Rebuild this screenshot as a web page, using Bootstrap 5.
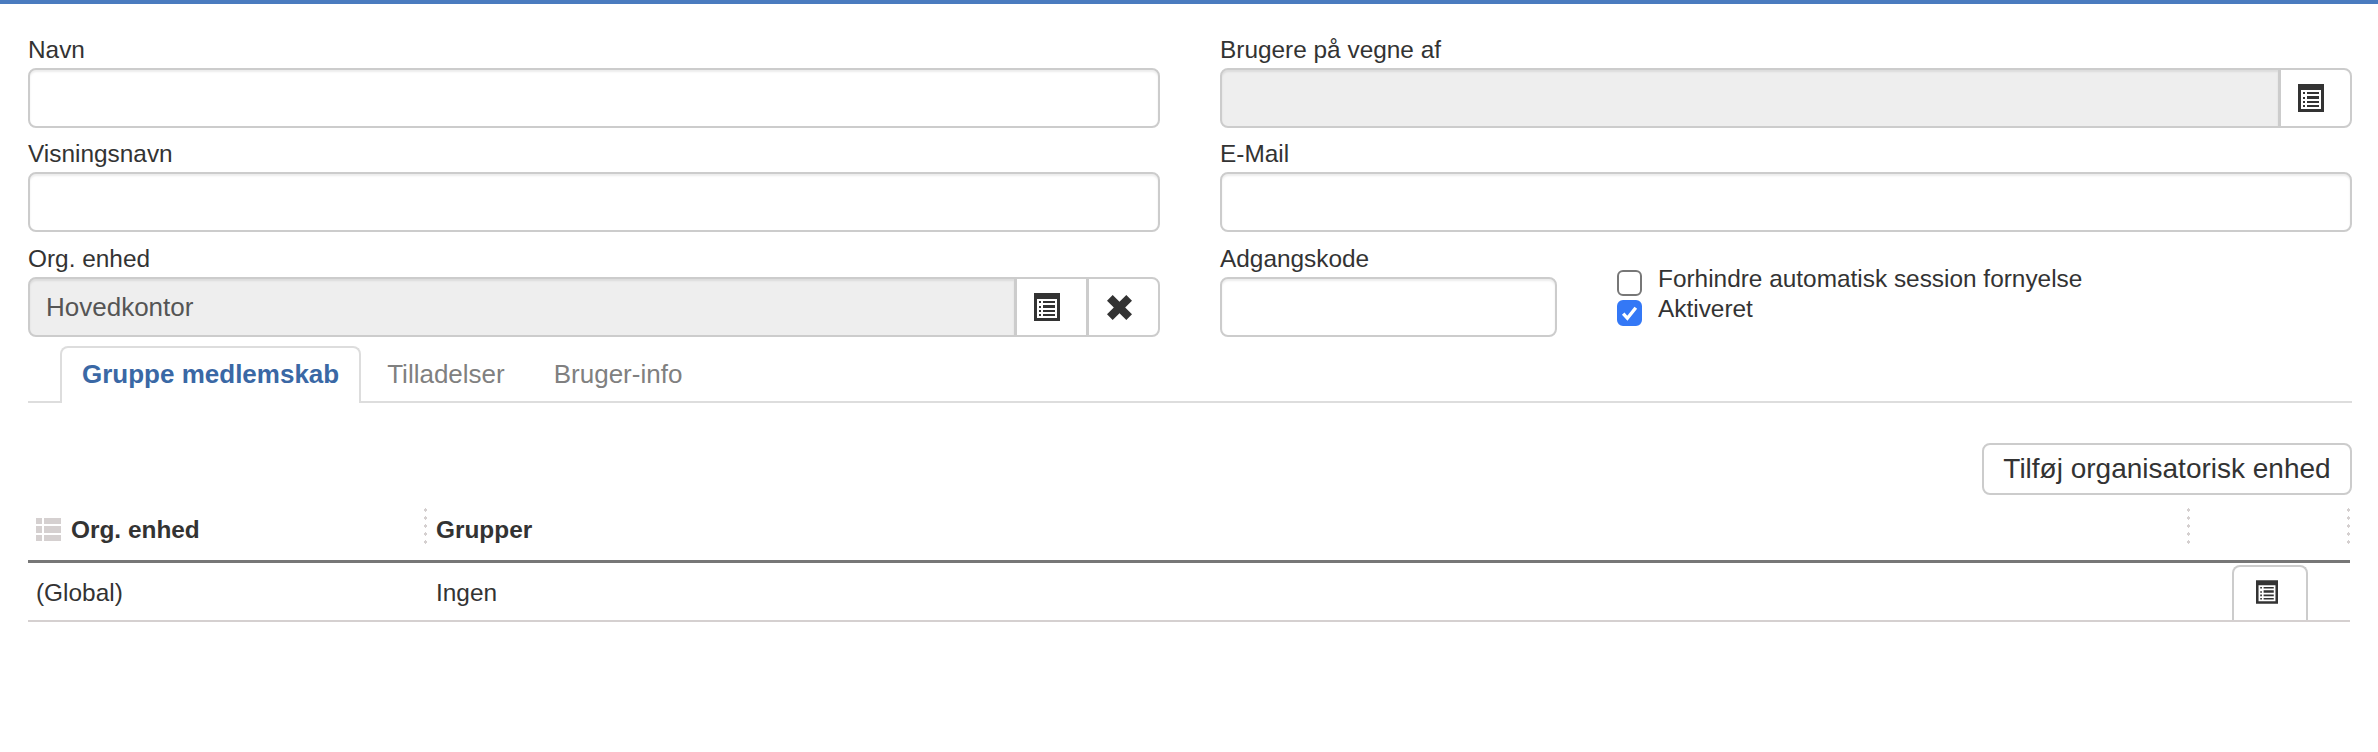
<!DOCTYPE html>
<html lang="da">
<head>
    <meta charset="UTF-8">
    <title>Bruger</title>
    <link href="https://cdn.jsdelivr.net/npm/bootstrap@5.3.0/dist/css/bootstrap.min.css" rel="stylesheet">
    <style>
        body {
            font-family: "Liberation Sans", Arial, sans-serif;
            font-size: 24.4px;
            color: #333;
            background: #fff;
            border-top: 4px solid #4a7bbf;
        }
        .page-wrap { padding: 20px 26px 0 28px; }
        .form-cols { --bs-gutter-x: 60px; --bs-gutter-y: 0; }
        .field-label { display: block; height: 44px; line-height: 52px; margin: 0; white-space: nowrap; }
        .field-last { margin-top: 1px; }
        .field-input {
            height: 60px;
            font-size: 26px;
            color: #555;
            border: 2px solid #ccc;
            border-radius: 8px;
            padding: 0 16px;
            box-shadow: inset 0 2px 2px rgba(0, 0, 0, .075);
        }
        .field-input:disabled, .field-input[readonly] { background: #eee; }
        .field-group .btn-pick {
            width: 73px;
            height: 60px;
            padding: 0 9px 0 0;
            border: 2px solid #ccc;
            border-radius: 8px;
            background: #fff;
            display: flex;
            align-items: center;
            justify-content: center;
        }
        .code-col { width: 337px; flex: none; }
        .check-col { margin-left: 60px; padding-top: 31px; }
        .check-line { display: flex; align-items: flex-start; gap: 16px; height: 30px; line-height: 30px; }
        .check-line .form-check-input {
            width: 25px;
            height: 26px;
            margin: 6px 0 0;
            border: 2px solid #777;
            border-radius: 6px;
            flex: none;
        }
        .check-line .form-check-input:checked {
            background-color: #3478f6;
            border-color: #3478f6;
            background-size: 100% 100%;
            background-image: url("data:image/svg+xml,%3csvg xmlns='http://www.w3.org/2000/svg' viewBox='0 0 20 20'%3e%3cpath fill='none' stroke='%23fff' stroke-width='3.2' d='M4 10.5l4 4.5 8-10'/%3e%3c/svg%3e");
        }
        .tab-row { margin-top: 9px; padding-left: 32px; border-bottom: 2px solid #ddd; }
        .tab-row .nav-link {
            height: 57px;
            padding: 0 21px;
            line-height: 52px;
            font-size: 26px;
            color: #808080;
            border: 2px solid transparent;
            border-bottom: 0;
            border-radius: 8px 8px 0 0;
            margin-bottom: -2px;
        }
        .tab-row .nav-link.active {
            padding: 0 20px;
            color: #3a68a5;
            font-weight: 700;
            background: #fff;
            border-color: #ddd;
        }
        .tab-row .nav-item + .nav-item .nav-link { margin-left: 3px; }
        .tool-row { margin-top: 40px; margin-bottom: 5px; }
        .btn-add {
            height: 52px;
            width: 370px;
            padding: 0;
            font-size: 28px;
            color: #333;
            background: #fff;
            border: 2px solid #ccc;
            border-radius: 8px;
        }
        .member-table { table-layout: fixed; width: 2322px; margin: 0; font-size: 24.4px; color: #333; }
        .member-table th {
            position: relative;
            height: 53px;
            padding: 0 8px 0 9px;
            vertical-align: middle;
            border-bottom: 3px solid #777;
            font-weight: 700;
            line-height: 60px;
        }
        .member-table th:first-child { padding-left: 8px; }
        .member-table th.has-dots::after {
            content: "";
            position: absolute;
            right: 0;
            top: 6px;
            width: 3px;
            height: 40px;
            background-image: radial-gradient(circle, #d5d0d0 1.5px, transparent 1.6px);
            background-size: 3px 8px;
        }
        .member-table td {
            height: 59px;
            padding: 4px 8px 0 9px;
            vertical-align: middle;
            border-bottom: 2px solid #d5d0d0;
        }
        .member-table td:first-child { padding-left: 8px; }
        .member-table td.row-action { padding: 0; vertical-align: bottom; text-align: center; }
        .btn-row {
            display: inline-flex;
            justify-content: center;
            align-items: flex-start;
            width: 76px;
            height: 55px;
            padding: 13px 6px 0 0;
            margin: 0;
            background: #fff;
            border: 2px solid #ccc;
            border-bottom: 0;
            border-radius: 8px 8px 0 0;
            vertical-align: bottom;
        }
        .head-icon { margin-right: 10px; vertical-align: -3px; }
    </style>
</head>
<body>
    <div class="page-wrap">
        <div class="row form-cols">
            <div class="col-6">
                <div>
                    <label class="field-label">Navn</label>
                    <input type="text" class="form-control field-input">
                </div>
                <div>
                    <label class="field-label">Visningsnavn</label>
                    <input type="text" class="form-control field-input">
                </div>
                <div class="field-last">
                    <label class="field-label">Org. enhed</label>
                    <div class="input-group field-group">
                        <input type="text" class="form-control field-input" value="Hovedkontor" disabled>
                        <button class="btn btn-pick" type="button">
                            <svg width="26" height="28" viewBox="0 0 26 28"><path fill="#333" fill-rule="evenodd" d="M0 0h26v28H0zM3 6v19h20V6z"/><path fill="#333" d="M5 8h2v2H5zM9 8h12v2H9zM5 13h2v2H5zM9 12h12v3H9zM5 17h2v2H5zM9 17h12v2H9zM5 21h2v2H5zM9 21h12v2H9z"/></svg>
                        </button>
                        <button class="btn btn-pick" type="button">
                            <svg width="25" height="25" viewBox="1 1 22 22"><path fill="#333" d="M6 1l6 6 6-6 5 5-6 6 6 6-5 5-6-6-6 6-5-5 6-6-6-6z"/></svg>
                        </button>
                    </div>
                </div>
            </div>
            <div class="col-6">
                <div>
                    <label class="field-label">Brugere på vegne af</label>
                    <div class="input-group field-group">
                        <input type="text" class="form-control field-input" disabled>
                        <button class="btn btn-pick" type="button">
                            <svg width="26" height="28" viewBox="0 0 26 28"><path fill="#333" fill-rule="evenodd" d="M0 0h26v28H0zM3 6v19h20V6z"/><path fill="#333" d="M5 8h2v2H5zM9 8h12v2H9zM5 13h2v2H5zM9 12h12v3H9zM5 17h2v2H5zM9 17h12v2H9zM5 21h2v2H5zM9 21h12v2H9z"/></svg>
                        </button>
                    </div>
                </div>
                <div>
                    <label class="field-label">E-Mail</label>
                    <input type="text" class="form-control field-input">
                </div>
                <div class="field-last d-flex">
                    <div class="code-col">
                        <label class="field-label">Adgangskode</label>
                        <input type="password" class="form-control field-input">
                    </div>
                    <div class="check-col">
                        <div class="check-line">
                            <input class="form-check-input" type="checkbox" id="chk-session">
                            <label for="chk-session">Forhindre automatisk session fornyelse</label>
                        </div>
                        <div class="check-line">
                            <input class="form-check-input" type="checkbox" id="chk-active" checked>
                            <label for="chk-active">Aktiveret</label>
                        </div>
                    </div>
                </div>
            </div>
        </div>

        <ul class="nav tab-row">
            <li class="nav-item"><a class="nav-link active" href="#">Gruppe medlemskab</a></li>
            <li class="nav-item"><a class="nav-link" href="#">Tilladelser</a></li>
            <li class="nav-item"><a class="nav-link" href="#">Bruger-info</a></li>
        </ul>

        <div class="d-flex justify-content-end tool-row">
            <button class="btn btn-add" type="button">Tilføj organisatorisk enhed</button>
        </div>

        <table class="table member-table">
            <colgroup>
                <col style="width: 399px">
                <col style="width: 1763px">
                <col style="width: 160px">
            </colgroup>
            <thead>
                <tr>
                    <th class="has-dots">
                        <svg class="head-icon" width="25" height="23" viewBox="0 0 25 23"><path fill="#d5d0d0" d="M0 0h6v6H0zM8 0h17v6H8zM0 8h6v7H0zM8 8h17v7H8zM0 17h6v6H0zM8 17h17v6H8z"/></svg>Org. enhed
                    </th>
                    <th class="has-dots">Grupper</th>
                    <th class="has-dots"></th>
                </tr>
            </thead>
            <tbody>
                <tr>
                    <td>(Global)</td>
                    <td>Ingen</td>
                    <td class="row-action">
                        <button class="btn btn-row" type="button">
                            <svg width="22" height="24" viewBox="0 0 26 28"><path fill="#333" fill-rule="evenodd" d="M0 0h26v28H0zM3 6v19h20V6z"/><path fill="#333" d="M5 8h2v2H5zM9 8h12v2H9zM5 13h2v2H5zM9 12h12v3H9zM5 17h2v2H5zM9 17h12v2H9zM5 21h2v2H5zM9 21h12v2H9z"/></svg>
                        </button>
                    </td>
                </tr>
            </tbody>
        </table>
    </div>
    <script src="https://cdn.jsdelivr.net/npm/bootstrap@5.3.0/dist/js/bootstrap.bundle.min.js"></script>
</body>
</html>
